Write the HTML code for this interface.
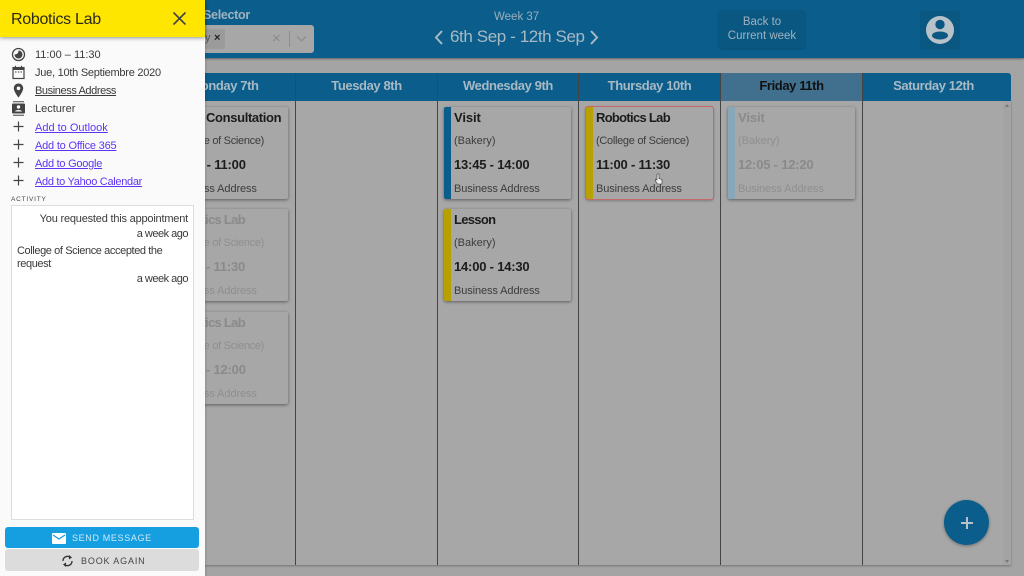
<!DOCTYPE html>
<html><head><meta charset="utf-8"><style>
html,body{margin:0;padding:0;width:1024px;height:576px;overflow:hidden;background:#a4a4a4;font-family:"Liberation Sans",sans-serif}
div,a,span{position:absolute;white-space:nowrap}
svg{position:absolute}
.colh{top:73px;height:28px;background:#0b5e8b;color:#a8b9c4;font-size:13px;font-weight:bold;line-height:25px;text-align:center;letter-spacing:-.4px}
.sep{top:73px;width:1px;height:492px;background:#444}
.card{width:127px;height:92px;background:#a7a7a7;border-radius:2px;box-shadow:0 1px 3px rgba(0,0,0,.45)}
.bar{left:0;top:0;width:7px;height:92px;border-radius:2px 0 0 2px}
.t{left:10px;top:2px;font-size:13px;font-weight:bold;color:#1c1c1c;line-height:18px;letter-spacing:-.7px}
.s{left:10px;top:26px;font-size:11px;color:#3c3c3c;line-height:16px;letter-spacing:-.3px}
.b{letter-spacing:0}
.h{left:10px;top:49px;font-size:13px;font-weight:bold;color:#1c1c1c;line-height:18px;letter-spacing:-.2px}
.a{left:10px;top:74px;font-size:11px;color:#3c3c3c;line-height:16px;letter-spacing:-.1px}
.f .t,.f .h{color:#8a8a8a}.f .s,.f .a{color:#8f8f8f}
.r{left:35px;font-size:11px;line-height:14px;color:#3a3a3a}
.l{color:#5f35f5;text-decoration:underline}
.ic{left:11px;width:15px;height:15px}
.act{font-size:11px;line-height:14px;color:#3a3a3a}
</style></head><body>
<div style="left:0;top:0;width:1024px;height:58px;background:#0b5e8b;box-shadow:0 1px 2px rgba(0,0,0,.4)"></div>
<div style="left:203px;top:8px;font-size:12.5px;font-weight:bold;color:#a0b2bf;letter-spacing:-.3px">Selector</div>
<div style="left:190px;top:25px;width:124px;height:28px;background:#a7a7a7;border-radius:3px"></div>
<div style="left:190px;top:29px;width:35px;height:20px;background:#9b9b9b;border-radius:2px"></div>
<div style="left:205px;top:32px;font-size:11px;color:#555">y</div>
<div style="left:214px;top:32px;font-size:11px;font-weight:bold;color:#222">×</div>
<div style="left:272px;top:30px;font-size:15px;color:#8a8a8a">×</div>
<div style="left:289px;top:31px;width:1px;height:16px;background:#8f8f8f"></div>
<svg style="left:296px;top:35px" width="11" height="8"><path d="M1 1.500L5.500 6L10 1.500" fill="none" stroke="#8f8f8f" stroke-width="1.300"/></svg>
<div style="left:494px;top:11px;font-size:11.500px;color:#9aaebd">Week 37</div>
<div style="left:450px;top:27px;font-size:17px;letter-spacing:-.4px;color:#a8b9c4">6th Sep - 12th Sep</div>
<svg style="left:433px;top:29px" width="11" height="17"><path d="M9 2L3 8.500L9 15" fill="none" stroke="#a8b9c4" stroke-width="2"/></svg>
<svg style="left:589px;top:29px" width="11" height="17"><path d="M2 2L8 8.500L2 15" fill="none" stroke="#a8b9c4" stroke-width="2"/></svg>
<div style="left:719px;top:10px;width:86px;height:33px;background:#0a5782;border-radius:3px;box-shadow:0 1px 2px rgba(0,0,0,.2);color:#a0b2bf;font-size:11.500px;line-height:14px;text-align:center;padding-top:5px">Back to<br>Current week</div>
<div style="left:920px;top:11px;width:40px;height:39px;background:#0a5782;border-radius:3px"></div>
<svg style="left:925px;top:15px" width="30" height="30"><circle cx="15" cy="15" r="14" fill="#b8c2c9"/><circle cx="15" cy="9.500" r="4.700" fill="#0a5782"/><ellipse cx="15" cy="20.500" rx="8" ry="4" fill="#0a5782"/></svg>

<div style="left:154px;top:101px;width:857px;height:464px;background:#a7a7a7;box-shadow:0 1px 2px rgba(0,0,0,.3)"></div>
<div class="colh" style="left:154px;width:141px">Monday 7th</div>
<div class="colh" style="left:296px;width:141px">Tuesday 8th</div>
<div class="colh" style="left:438px;width:140px">Wednesday 9th</div>
<div class="colh" style="left:579px;width:141px">Thursday 10th</div>
<div class="colh" style="left:721px;width:141px;background:#41708e;color:#111">Friday 11th</div>
<div class="colh" style="left:863px;width:148px;border-radius:0 3px 0 0;text-indent:-7px">Saturday 12th</div>
<div class="sep" style="left:295px"></div><div class="sep" style="left:437px"></div><div class="sep" style="left:578px"></div><div class="sep" style="left:720px"></div><div class="sep" style="left:862px"></div>
<div style="left:1003px;top:101px;width:8px;height:464px;background:#a3a3a3"></div>
<div style="left:1005px;top:104px;width:0;height:0;border:2px solid transparent;border-bottom:3px solid #777;border-top:0"></div>
<div style="left:1005px;top:560px;width:0;height:0;border:2px solid transparent;border-top:3px solid #777;border-bottom:0"></div>

<div class="card" style="left:161px;top:107px"><div class="t" style="left:45px;letter-spacing:-.35px">Consultation</div><div class="s">(College of Science)</div><div class="h">10:30 - 11:00</div><div class="a">Business Address</div></div>
<div class="card f" style="left:161px;top:209px"><div class="t">Robotics Lab</div><div class="s">(College of Science)</div><div class="h">11:00 - 11:30</div><div class="a">Business Address</div></div>
<div class="card f" style="left:161px;top:312px"><div class="t">Robotics Lab</div><div class="s">(College of Science)</div><div class="h">11:30 - 12:00</div><div class="a">Business Address</div></div>

<div class="card" style="left:444px;top:107px"><div class="bar" style="background:#0b5e8b"></div><div class="t" style="letter-spacing:-.1px">Visit</div><div class="s b">(Bakery)</div><div class="h">13:45 - 14:00</div><div class="a">Business Address</div></div>
<div class="card" style="left:444px;top:209px"><div class="bar" style="background:#b8a000"></div><div class="t">Lesson</div><div class="s b">(Bakery)</div><div class="h">14:00 - 14:30</div><div class="a">Business Address</div></div>
<div class="card" style="left:586px;top:107px"><div class="bar" style="background:#b8a000"></div><div class="t">Robotics Lab</div><div class="s">(College of Science)</div><div class="h">11:00 - 11:30</div><div class="a">Business Address</div><div style="left:-1px;top:-1px;width:126.500px;height:91.500px;border:1.500px solid #c46a6a;border-radius:3px"></div></div>
<div class="card f" style="left:728px;top:107px"><div class="bar" style="background:#88a8ba"></div><div class="t" style="letter-spacing:-.1px">Visit</div><div class="s b">(Bakery)</div><div class="h">12:05 - 12:20</div><div class="a">Business Address</div></div>
<svg style="left:654px;top:173px" width="9" height="12"><path d="M3 1v6l-1.500-1L1.500 8L3.500 11H8V6.500L5 5.500V1z" fill="#eee" stroke="#333" stroke-width=".6"/></svg>

<div style="left:944px;top:500px;width:45px;height:45px;border-radius:50%;background:#0b5e8b;box-shadow:0 1px 3px rgba(0,0,0,.35)"></div>
<div style="left:961px;top:522px;width:12px;height:1.500px;background:#b8c2c9"></div>
<div style="left:966px;top:516.500px;width:1.500px;height:12px;background:#b8c2c9"></div>

<div style="left:0;top:0;width:205px;height:576px;background:#fafafa;box-shadow:1px 0 2px rgba(0,0,0,.15)"></div>
<div style="left:0;top:0;width:205px;height:37px;background:#ffe600;box-shadow:0 1px 4px rgba(0,0,0,.4)"></div>
<div style="left:11px;top:10px;font-size:16px;line-height:20px;color:#2b2b1a;letter-spacing:-.3px">Robotics Lab</div>
<svg style="left:172px;top:11px" width="15" height="15"><path d="M1.500 1.500L13.500 13.500M13.500 1.500L1.500 13.500" stroke="#444" stroke-width="1.600"/></svg>

<svg class="ic" style="top:47px" viewBox="0 0 15 15"><circle cx="7.500" cy="7.500" r="6" fill="none" stroke="#444" stroke-width="1.300"/><path d="M7.500 3.500A4 4 0 1 1 3.500 7.500C6 7.500 7.500 6 7.500 3.500Z" fill="#444"/></svg>
<svg class="ic" style="top:65px" viewBox="0 0 15 15"><rect x="2" y="2.500" width="11" height="11" fill="none" stroke="#444" stroke-width="1.200"/><rect x="2" y="2.500" width="11" height="2.500" fill="#444"/><path d="M4.500 .8v2M10.500 .8v2" stroke="#444"/><path d="M4 7h1.500M6.800 7h1.500M9.500 7H11" stroke="#444"/></svg>
<svg class="ic" style="top:83px" viewBox="0 0 15 15"><path fill-rule="evenodd" d="M7.500 .5C4.800.5 2.800 2.600 2.800 5.200 2.800 8.600 7.500 14.500 7.500 14.500S12.200 8.600 12.200 5.200C12.200 2.600 10.200.5 7.500.5ZM7.500 3.500A1.800 1.800 0 1 1 7.500 7.100 1.800 1.800 0 0 1 7.500 3.500Z" fill="#444"/></svg>
<svg class="ic" style="top:101px" viewBox="0 0 15 15"><path d="M2 .8h11M2 14.200h11" stroke="#444"/><rect x="1" y="2.500" width="13" height="10" rx="1" fill="#444"/><circle cx="7.500" cy="6" r="1.700" fill="#fafafa"/><path d="M4 10.500c.5-2 6.500-2 7 0z" fill="#fafafa"/></svg>
<svg class="ic" style="top:119px" viewBox="0 0 15 15"><path d="M7.500 2.500v10M2.500 7.500h10" stroke="#444" stroke-width="1.200"/></svg>
<svg class="ic" style="top:137px" viewBox="0 0 15 15"><path d="M7.500 2.500v10M2.500 7.500h10" stroke="#444" stroke-width="1.200"/></svg>
<svg class="ic" style="top:155px" viewBox="0 0 15 15"><path d="M7.500 2.500v10M2.500 7.500h10" stroke="#444" stroke-width="1.200"/></svg>
<svg class="ic" style="top:173px" viewBox="0 0 15 15"><path d="M7.500 2.500v10M2.500 7.500h10" stroke="#444" stroke-width="1.200"/></svg>

<div class="r" style="top:48px">11:00 – 11:30</div>
<div class="r" style="top:66px;letter-spacing:-.25px">Jue, 10th Septiembre 2020</div>
<div class="r" style="top:84px;text-decoration:underline;letter-spacing:-.4px">Business Address</div>
<div class="r" style="top:102px">Lecturer</div>
<a class="r l" style="top:121px">Add to Outlook</a>
<a class="r l" style="top:139px;letter-spacing:-.2px">Add to Office 365</a>
<a class="r l" style="top:157px;letter-spacing:-.25px">Add to Google</a>
<a class="r l" style="top:175px;letter-spacing:-.3px">Add to Yahoo Calendar</a>
<div style="left:11px;top:196px;font-size:6.500px;letter-spacing:.8px;color:#444;line-height:8px">ACTIVITY</div>
<div style="left:11px;top:205px;width:181px;height:313px;background:#fff;border:1px solid #ddd"></div>
<div class="act" style="right:836px;top:212px;letter-spacing:-.2px">You requested this appointment</div>
<div class="act" style="right:836px;top:227px;letter-spacing:-.5px">a week ago</div>
<div class="act" style="left:17px;top:245px;line-height:13px;letter-spacing:-.4px">College of Science accepted the<br>request</div>
<div class="act" style="right:836px;top:272px;letter-spacing:-.5px">a week ago</div>

<div style="left:5px;top:527px;width:194px;height:21px;background:#159ee0;border-radius:3px"></div>
<svg style="left:52px;top:533px" width="14" height="11"><rect width="14" height="11" rx="1" fill="#fff"/><path d="M1 2L7 6L13 2" fill="none" stroke="#159ee0" stroke-width="1.200"/></svg>
<div style="left:72px;top:532px;font-size:9px;letter-spacing:.65px;line-height:12px;color:#cdeafa">SEND MESSAGE</div>
<div style="left:5px;top:549px;width:194px;height:22px;background:#dcdcdc;border-radius:3px"></div>
<svg style="left:61px;top:554px" width="13" height="14" viewBox="0 0 13 14"><path d="M2 7A4.500 4.500 0 0 1 9.500 3.500M11 7A4.500 4.500 0 0 1 3.500 10.500" fill="none" stroke="#333" stroke-width="1.300"/><path d="M8 1L11 3.500L8 5.500zM5 8.500L2 10.500L5 13z" fill="#333"/></svg>
<div style="left:81px;top:555px;font-size:9px;letter-spacing:.85px;line-height:12px;color:#444">BOOK AGAIN</div>
</body></html>
